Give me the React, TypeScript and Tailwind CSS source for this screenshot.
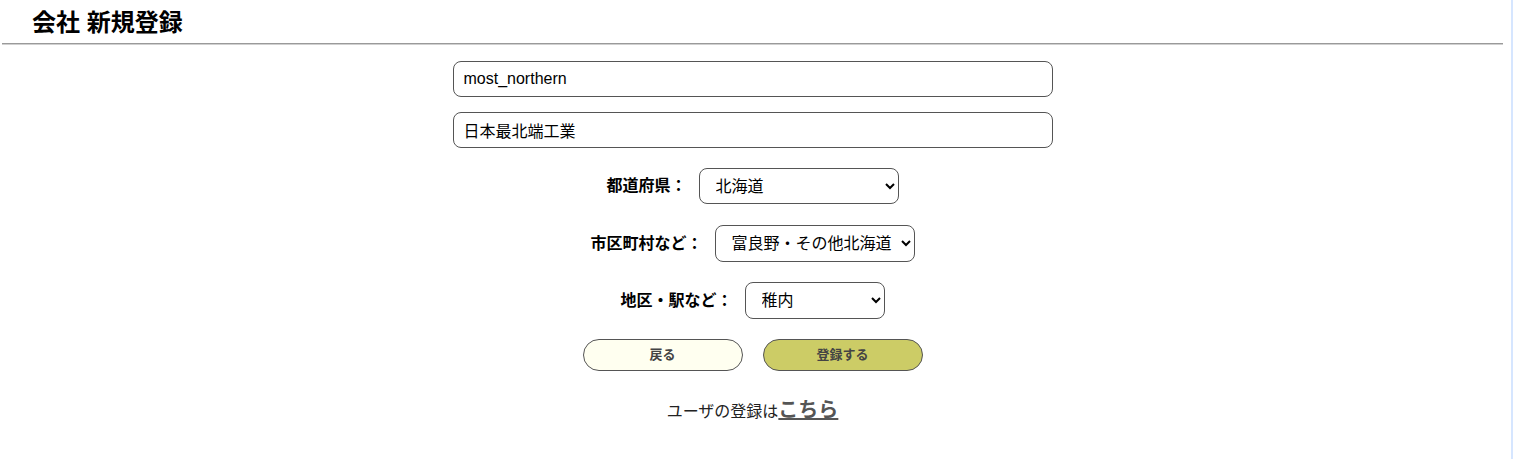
import React from "react";

const jp = { fontFamily: '"Liberation Sans", Arial, "Noto Sans CJK JP", sans-serif' };

export default function App() {
  return (
    <div className="w-[1513px] h-[459px] bg-white flex text-black" style={jp}>
      <div className="w-[1505px] flex flex-col">
        <div className="h-[43px] pl-[32px] pt-[7px] text-[24px] font-bold leading-[32px]">会社 新規登録</div>
        <div className="mx-[2px] h-[2px] border-t border-t-[#9a9a9a] border-b border-b-[#d0d0d0]"></div>
        <div className="flex flex-col items-center pt-[16px]">
          <input
            className="w-[600px] h-[36px] rounded-[8px] border border-[#555] px-[10px] text-[16px] outline-none"
            defaultValue="most_northern"
          />
          <input
            className="mt-[15px] w-[600px] h-[36px] rounded-[8px] border border-[#555] px-[10px] text-[16px] outline-none"
            defaultValue="日本最北端工業"
          />
          <div className="mt-[20px] flex items-center gap-[12px]">
            <span className="text-[16px] font-bold">都道府県：</span>
            <select className="w-[200px] h-[36px] rounded-[8px] border border-[#555] pl-[12px] pr-[6px] text-[16px] bg-white" defaultValue="北海道">
              <option>北海道</option>
            </select>
          </div>
          <div className="mt-[21px] flex items-center gap-[12px]">
            <span className="text-[16px] font-bold">市区町村など：</span>
            <select className="w-[200px] h-[37px] rounded-[8px] border border-[#555] pl-[12px] pr-[6px] text-[16px] bg-white" defaultValue="a">
              <option value="a">富良野・その他北海道</option>
            </select>
          </div>
          <div className="mt-[20px] flex items-center gap-[12px]">
            <span className="text-[16px] font-bold">地区・駅など：</span>
            <select className="w-[140px] h-[37px] rounded-[8px] border border-[#555] pl-[12px] pr-[6px] text-[16px] bg-white" defaultValue="稚内">
              <option>稚内</option>
            </select>
          </div>
          <div className="mt-[20px] flex gap-[20px]">
            <button className="w-[160px] h-[32px] rounded-full border border-[#555] bg-[#fffff0] text-[13px] font-bold text-[#444]">戻る</button>
            <button className="w-[160px] h-[32px] rounded-full border border-[#555] bg-[#cccc66] text-[13px] font-bold text-[#444]">登録する</button>
          </div>
          <div className="mt-[24px] text-[16px] text-[#222]">
            ユーザの登録は<a href="#" className="text-[20px] font-bold text-[#555] underline">こちら</a>
          </div>
        </div>
      </div>
      <div className="flex-1"></div>
      <div className="w-[2px] bg-[#d6e6ff]"></div>
    </div>
  );
}
